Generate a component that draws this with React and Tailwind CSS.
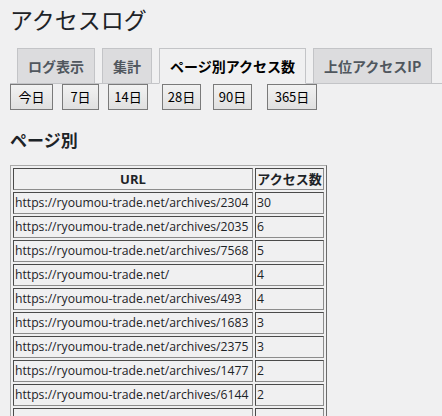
const jp = { fontFamily: '"Noto Sans CJK JP", "Noto Sans", sans-serif' };

const tabs = [
  { label: 'ログ表示', active: false },
  { label: '集計', active: false },
  { label: 'ページ別アクセス数', active: true },
  { label: '上位アクセスIP', active: false },
];

const ranges = [
  { label: '今日', cls: 'w-[43px]' },
  { label: '7日', cls: 'ml-[9px] w-[37px]' },
  { label: '14日', cls: 'ml-[9px] w-[40px]' },
  { label: '28日', cls: 'ml-[14px] w-[39px]' },
  { label: '90日', cls: 'ml-[12px] w-[39px]' },
  { label: '365日', cls: 'ml-[15px] w-[50px]' },
];

const base = 'https://ryoumou-trade.net/';
const rows = [
  [base + 'archives/2304', 30],
  [base + 'archives/2035', 6],
  [base + 'archives/7568', 5],
  [base, 4],
  [base + 'archives/493', 4],
  [base + 'archives/1683', 3],
  [base + 'archives/2375', 3],
  [base + 'archives/1477', 2],
  [base + 'archives/6144', 2],
];

const cell =
  'h-[22px] p-[1px] border border-t-[#4a4a4a] border-l-[#4a4a4a] border-b-[#8c8c8c] border-r-[#8c8c8c] whitespace-nowrap leading-[18px]';

export default function App() {
  return (
    <div className="min-h-screen bg-[#f0f0f1] pl-[10px] text-[#1d2327]" style={jp}>
      <h1 className="pt-[4px] text-[23px] font-normal leading-[30px]">アクセスログ</h1>

      <nav className="mt-[14px] flex border-b border-[#c3c4c7]">
        {tabs.map((t) => (
          <span
            key={t.label}
            className={
              t.active
                ? '-mb-px ml-[7px] border border-[#c3c4c7] border-b-[#f0f0f1] bg-[#f0f0f1] px-[10px] py-[5px] text-[14px] font-bold leading-[24px] text-black'
                : '-mb-px ml-[7px] border border-[#c3c4c7] bg-[#dcdcde] px-[10px] py-[5px] text-[14px] font-bold leading-[24px] text-[#50575e]'
            }
          >
            {t.label}
          </span>
        ))}
      </nav>

      <div className="flex">
        {ranges.map((r) => (
          <button
            key={r.label}
            className={
              r.cls +
              ' h-[26px] border border-[#7a7a7a] bg-gradient-to-b from-[#f2f2f2] to-[#e0e0e0] text-center text-[13px] leading-[24px] text-black'
            }
          >
            {r.label}
          </button>
        ))}
      </div>

      <h2 className="mt-[18px] text-[17px] font-bold leading-[24px] text-[#1d2327]">ページ別</h2>

      <table
        className="mt-[13px] border-separate border-spacing-[2px] border border-t-[#a9a9a9] border-l-[#a9a9a9] border-b-[#6b6b6b] border-r-[#6b6b6b] text-[12.2px] text-[#1d2327]"
        style={{ fontFamily: '"Open Sans", "Noto Sans CJK JP", sans-serif' }}
      >
        <thead>
          <tr>
            <th className={cell + ' w-[240px] text-center text-[13px] font-bold'}>URL</th>
            <th className={cell + ' w-[69px] text-center text-[13px] font-bold'} style={jp}>
              アクセス数
            </th>
          </tr>
        </thead>
        <tbody>
          {rows.map(([url, n]) => (
            <tr key={url}>
              <td className={cell + ' text-left'}>{url}</td>
              <td className={cell + ' text-left'}>{n}</td>
            </tr>
          ))}
          <tr>
            <td className={cell}>&nbsp;</td>
            <td className={cell}>&nbsp;</td>
          </tr>
        </tbody>
      </table>
    </div>
  );
}
